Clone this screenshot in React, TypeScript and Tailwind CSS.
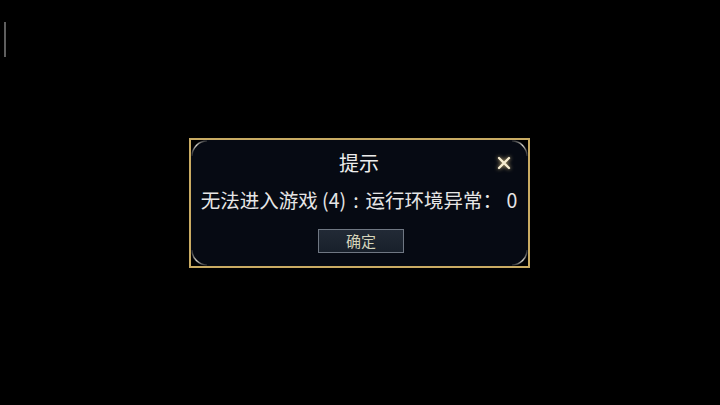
import React from "react";

const Corner = ({ className, rot }: { className: string; rot: number }) => (
  <svg
    className={className}
    width="16"
    height="16"
    viewBox="0 0 16 16"
    style={{ transform: `rotate(${rot}deg)` }}
  >
    <defs>
      <linearGradient id={`g${rot}`} x1="0" y1="1" x2="1" y2="0">
        <stop offset="0" stopColor="#9a968c" stopOpacity="0.2" />
        <stop offset="0.5" stopColor="#d8d4c8" stopOpacity="1" />
        <stop offset="1" stopColor="#9a968c" stopOpacity="0.2" />
      </linearGradient>
    </defs>
    <path d="M1 16 A15 15 0 0 1 16 1" fill="none" stroke={`url(#g${rot})`} strokeWidth="1.4" />
  </svg>
);

export default function App() {
  return (
    <div
      className="relative w-[720px] h-[405px] bg-black flex items-center justify-center"
      style={{ fontFamily: '"Noto Sans CJK SC", "Noto Sans", sans-serif' }}
    >
      <div className="absolute left-[4px] top-[22px] w-[2px] h-[35px] bg-[#5e5e5e]" />
      <div className="w-[341px] h-[130px] border-2 border-[#c9ab63] bg-black ml-[-2px]">
        <div className="relative h-full rounded-[15px] bg-[#060a13] flex flex-col items-center">
          <Corner className="absolute left-0 top-0" rot={0} />
          <Corner className="absolute right-0 top-0" rot={90} />
          <Corner className="absolute right-0 bottom-0" rot={180} />
          <Corner className="absolute left-0 bottom-0" rot={270} />
          <div className="mt-[12px] h-[22px] leading-[22px] text-[20px] text-[#ececec]">提示</div>
          <svg
            className="absolute right-[17px] top-[16px]"
            width="14"
            height="14"
            viewBox="0 0 14 14"
            style={{ filter: "drop-shadow(0 0 2px rgba(240,210,140,0.9))" }}
          >
            <path d="M2 2 L12 12 M12 2 L2 12" stroke="#f6ecd0" strokeWidth="2.4" strokeLinecap="round" />
          </svg>
          <div className="mt-[15px] h-[22px] leading-[22px] text-[19.5px] text-[#e6e6e6] whitespace-nowrap">
            无法进入游戏 (4)<span className="mx-[7px]">:</span>运行环境异常： 0
          </div>
          <div className="mt-[18px] ml-[4px] w-[86px] h-[24px] border border-[#6f7783] bg-gradient-to-b from-[#222a36] to-[#18202b] flex items-center justify-center text-[15px] text-[#d4d4ba] leading-none">
            确定
          </div>
        </div>
      </div>
    </div>
  );
}
